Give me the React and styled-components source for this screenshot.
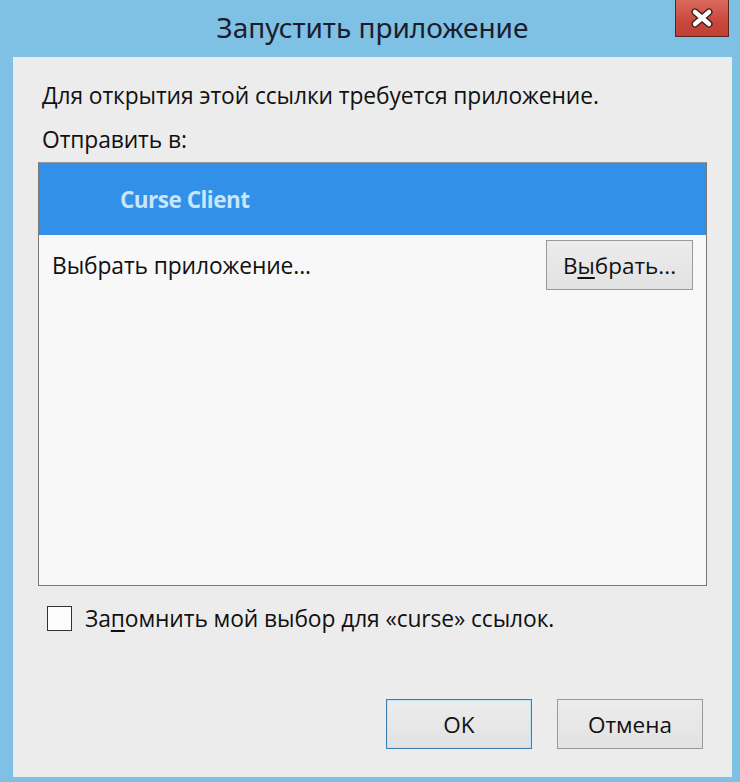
import React from "react";
import styled, { createGlobalStyle } from "styled-components";

const Global = createGlobalStyle`
  html, body { margin: 0; padding: 0; background: #7fc0e5; }
  * { box-sizing: border-box; }
`;

const Window = styled.div`
  width: 740px;
  height: 782px;
  background: #7fc0e5;
  display: flex;
  flex-direction: column;
  padding: 0 8px 5px 13px;
  font-family: "Open Sans", "Noto Sans", sans-serif;
  color: #111;
`;

const TitleBar = styled.div`
  position: relative;
  height: 57px;
  flex: none;
  display: flex;
  align-items: center;
  justify-content: center;
`;

const Title = styled.div`
  font-family: "Noto Sans", "Open Sans", sans-serif;
  font-size: 28px;
  color: #1b1d2c;
  margin-top: -4px;
  margin-left: 0px;
`;

const CloseButton = styled.div`
  position: absolute;
  top: 0;
  right: 3px;
  width: 54px;
  height: 37px;
  background: linear-gradient(#da6a5d, #c8483c 60%, #c13e33);
  border: 1px solid #5b2420;
  border-top: none;
  display: flex;
  align-items: center;
  justify-content: center;
`;

const Content = styled.div`
  flex: 1;
  background: #ececec;
  border-top: 1px solid #e4eef4;
  display: flex;
  flex-direction: column;
  padding: 0 25px 0 25px;
`;

const Label = styled.div`
  height: 30px;
  margin-top: ${(p) => p.mt}px;
  display: flex;
  align-items: center;
  padding-left: 4px;
  font-size: 22.8px;
  letter-spacing: -0.1px;
`;

const ListBox = styled.div`
  height: 424px;
  margin-top: 8px;
  flex: none;
  background: #f8f8f8;
  border: 1px solid #777;
  border-top-color: #999;
  display: flex;
  flex-direction: column;
`;

const SelectedItem = styled.div`
  height: 72px;
  background: #3390e8;
  display: flex;
  align-items: center;
  padding-left: 81px;
  font-family: "Open Sans", "Noto Sans", sans-serif;
  font-weight: 700;
  font-size: 22.5px;
  color: #c8e6f8;
  letter-spacing: -0.5px;
`;

const ChooseRow = styled.div`
  display: flex;
  align-items: center;
  justify-content: space-between;
  padding: 5px 13px 0 13px;
`;

const ChooseText = styled.div`
  font-size: 22.8px;
  letter-spacing: -0.1px;
`;

const Button = styled.div`
  width: ${(p) => p.w || 146}px;
  height: 50px;
  background: linear-gradient(#ececec, #e2e2e2);
  border: 1px solid ${(p) => (p.def ? "#3c7fb1" : "#999")};
  box-shadow: ${(p) => (p.def ? "inset 0 0 0 1px #bfe3f5" : "none")};
  display: flex;
  align-items: center;
  justify-content: center;
  font-size: 22.5px;
  color: #111;
`;

const U = styled.span`
  text-decoration: underline;
  text-underline-offset: 3px;
`;

const CheckRow = styled.div`
  display: flex;
  align-items: center;
  gap: 13px;
  margin-top: 19px;
  padding-left: 9px;
  height: 26px;
`;

const CheckBox = styled.div`
  width: 25px;
  height: 25px;
  background: #fcfcfc;
  border: 1.5px solid #333;
`;

const CheckText = styled.div`
  font-size: 22.8px;
  letter-spacing: -0.1px;
`;

const Footer = styled.div`
  display: flex;
  justify-content: flex-end;
  gap: 25px;
  margin-top: 68px;
  padding-right: 4px;
`;

export default function App() {
  return (
    <>
      <Global />
      <Window>
        <TitleBar>
          <Title>Запустить приложение</Title>
          <CloseButton>
            <svg width="24" height="20" viewBox="0 0 24 20">
              <path
                d="M5 4 L19 16 M19 4 L5 16"
                stroke="#3a1a16"
                strokeWidth="7"
                strokeLinecap="round"
              />
              <path
                d="M5 4 L19 16 M19 4 L5 16"
                stroke="#fff"
                strokeWidth="4.5"
                strokeLinecap="round"
              />
            </svg>
          </CloseButton>
        </TitleBar>
        <Content>
          <Label mt={22}>Для открытия этой ссылки требуется приложение.</Label>
          <Label mt={14}>Отправить в:</Label>
          <ListBox>
            <SelectedItem>Curse Client</SelectedItem>
            <ChooseRow>
              <ChooseText>Выбрать приложение...</ChooseText>
              <Button w={147}>
                В<U>ы</U>брать...
              </Button>
            </ChooseRow>
          </ListBox>
          <CheckRow>
            <CheckBox />
            <CheckText>
              За<U>п</U>омнить мой выбор для «curse» ссылок.
            </CheckText>
          </CheckRow>
          <Footer>
            <Button def>OK</Button>
            <Button>Отмена</Button>
          </Footer>
        </Content>
      </Window>
    </>
  );
}
